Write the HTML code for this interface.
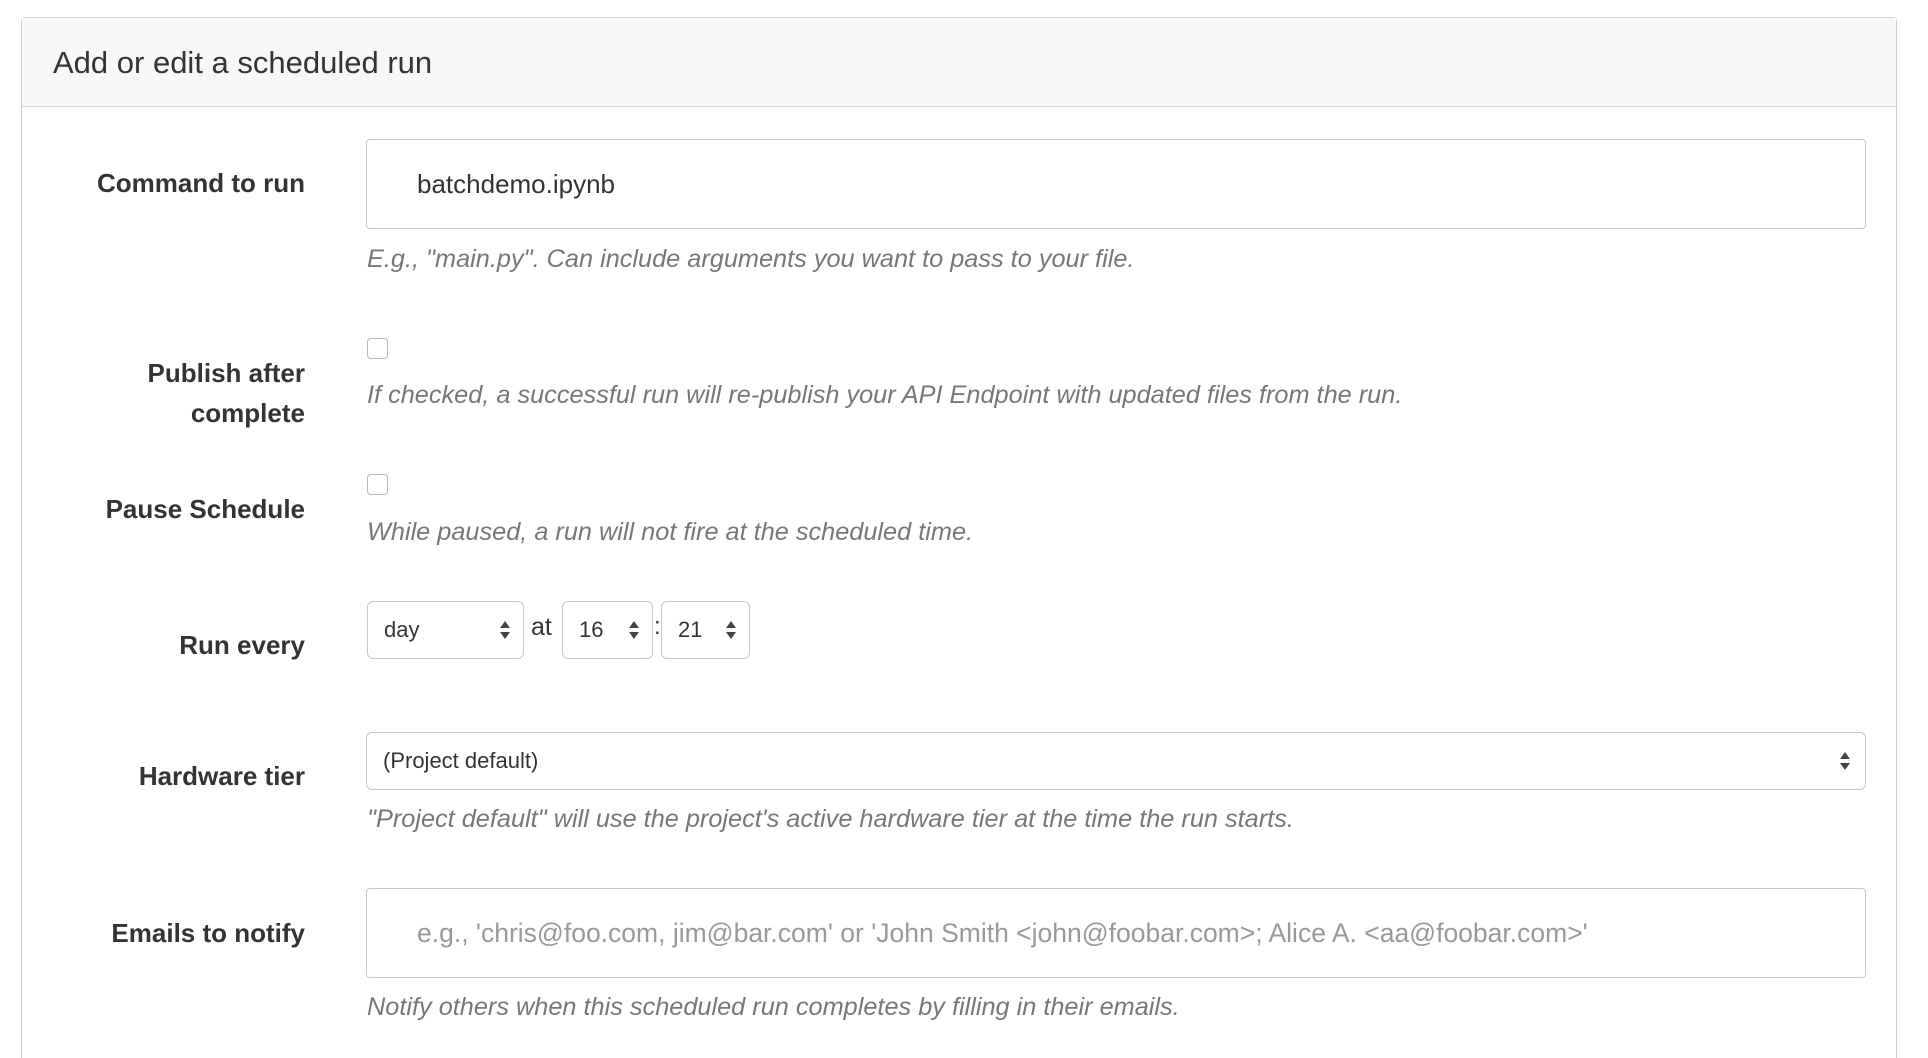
<!DOCTYPE html>
<html><head><meta charset="utf-8"><style>
body{margin:0;width:1928px;height:1042px;background:#fff;font-family:"Liberation Sans",sans-serif;position:relative;overflow:hidden;color:#333}
.panel{position:absolute;left:21px;top:17px;width:1874px;height:1040px;border:1px solid #cfd2d6;border-bottom:none;border-radius:4px 4px 0 0}
.hdr{position:absolute;left:0;top:0;right:0;height:88px;background:#f6f7f9;border-bottom:1px solid #d6d8db}
.hdr span{position:absolute;left:31px;top:27px;font-size:31px;color:#333}
.lab{position:absolute;right:1623px;font-weight:bold;font-size:26px;color:#333;text-align:right;line-height:40px}
.inp{position:absolute;left:366px;width:1500px;border:1px solid #c4c7cb;border-radius:4px;background:#fff;box-sizing:border-box}
.help{position:absolute;left:367px;font-style:italic;font-size:25.3px;color:#777;white-space:nowrap}
.cb{position:absolute;left:367px;width:21px;height:21px;border:1px solid #b5b8bc;border-radius:4px;box-sizing:border-box;background:#fff}
.sel{position:absolute;top:601px;height:58px;border:1px solid #c4c7cb;border-radius:6px;box-sizing:border-box;font-size:22px;line-height:56px;padding-left:16px;color:#333}
.arr{position:absolute;right:12px;top:50%;margin-top:-11px;width:12px;height:22px}
</style></head><body>
<div class="panel"><div class="hdr"><span>Add or edit a scheduled run</span></div></div>

<div class="lab" style="top:163px">Command to run</div>
<div class="inp" style="top:139px;height:90px"><span style="position:absolute;left:50px;top:29px;font-size:26px;color:#333">batchdemo.ipynb</span></div>
<div class="help" style="top:245px">E.g., "main.py". Can include arguments you want to pass to your file.</div>

<div class="cb" style="top:338px"></div>
<div class="lab" style="top:353px">Publish after<br>complete</div>
<div class="help" style="top:381px">If checked, a successful run will re-publish your API Endpoint with updated files from the run.</div>

<div class="cb" style="top:474px"></div>
<div class="lab" style="top:489px">Pause Schedule</div>
<div class="help" style="top:518px">While paused, a run will not fire at the scheduled time.</div>

<div class="lab" style="top:625px">Run every</div>
<div class="sel" style="left:367px;width:157px">day<svg class="arr" viewBox="0 0 12 22"><path d="M1 9L6 2L11 9Z M1 13L6 20L11 13Z" fill="#444"/></svg></div>
<div style="position:absolute;left:531px;top:613px;font-size:25px">at</div>
<div class="sel" style="left:562px;width:91px">16<svg class="arr" viewBox="0 0 12 22"><path d="M1 9L6 2L11 9Z M1 13L6 20L11 13Z" fill="#444"/></svg></div>
<div style="position:absolute;left:654px;top:613px;font-size:24px">:</div>
<div class="sel" style="left:661px;width:89px">21<svg class="arr" viewBox="0 0 12 22"><path d="M1 9L6 2L11 9Z M1 13L6 20L11 13Z" fill="#444"/></svg></div>

<div class="lab" style="top:756px">Hardware tier</div>
<div class="sel" style="left:366px;width:1500px;top:732px;height:58px">(Project default)<svg class="arr" style="right:14px" viewBox="0 0 12 22"><path d="M1 9L6 2L11 9Z M1 13L6 20L11 13Z" fill="#444"/></svg></div>
<div class="help" style="top:805px">"Project default" will use the project's active hardware tier at the time the run starts.</div>

<div class="lab" style="top:913px">Emails to notify</div>
<div class="inp" style="top:888px;height:90px"><span style="position:absolute;left:50px;top:29px;font-size:26.5px;color:#999;white-space:nowrap">e.g., 'chris@foo.com, jim@bar.com' or 'John Smith &lt;john@foobar.com&gt;; Alice A. &lt;aa@foobar.com&gt;'</span></div>
<div class="help" style="top:993px">Notify others when this scheduled run completes by filling in their emails.</div>
</body></html>
